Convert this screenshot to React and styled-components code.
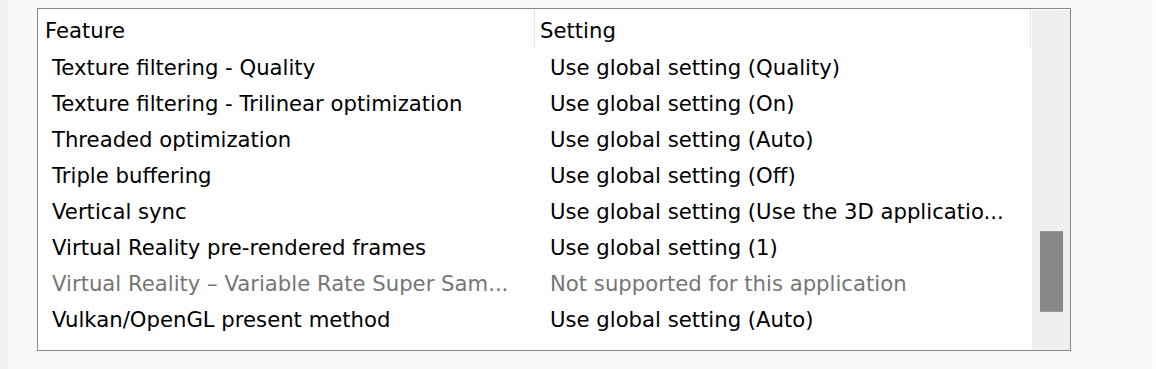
import React from "react";
import styled, { createGlobalStyle } from "styled-components";

const GlobalStyle = createGlobalStyle`
  html, body { margin: 0; padding: 0; background: #f9f9f9; }
  body { font-family: "DejaVu Sans", "Noto Sans", sans-serif; }
  * { box-sizing: border-box; }
`;

const Page = styled.div`
  width: 1156px;
  height: 369px;
  background: #f9f9f9;
  border-left: 8px solid #f0f0f0;
  border-right: 4px solid #fcfcfc;
  padding: 8px 0 0 29px;
`;

const ListBox = styled.div`
  width: 1034px;
  height: 343px;
  border: 1px solid #828790;
  background: #ffffff;
  padding-top: 1px;
  display: flex;
  overflow: hidden;
`;

const Content = styled.div`
  width: 994px;
  display: flex;
  flex-direction: column;
`;

const HeaderRow = styled.div`
  display: grid;
  grid-template-columns: 497px 496px;
  height: 40px;
`;

const HeaderCell = styled.div`
  height: 39px;
  border-right: 1px solid #e5e5e5;
  padding-left: ${(p) => p.$pad}px;
  padding-top: 1px;
  font-size: 21.2px;
  line-height: 39px;
  color: #000;
  white-space: nowrap;
`;

const Row = styled.div`
  display: grid;
  grid-template-columns: 497px 497px;
  height: 36px;
  font-size: 21.2px;
  line-height: 36px;
  color: ${(p) => (p.$disabled ? "#767676" : "#000000")};
`;

const Cell = styled.div`
  padding-left: ${(p) => p.$pad}px;
  white-space: nowrap;
  overflow: hidden;
`;

const ScrollTrack = styled.div`
  width: 38px;
  height: 340px;
  background: #efefef;
  display: flex;
  flex-direction: column;
  align-items: center;
`;

const Thumb = styled.div`
  width: 23px;
  height: 81px;
  margin-top: ${(p) => p.$offset}px;
  margin-left: 1px;
  background: #888888;
  border-top: 1px solid #999999;
  border-bottom: 1px solid #999999;
`;

const rows = [
  { feature: "Texture filtering - Quality", setting: "Use global setting (Quality)" },
  { feature: "Texture filtering - Trilinear optimization", setting: "Use global setting (On)" },
  { feature: "Threaded optimization", setting: "Use global setting (Auto)" },
  { feature: "Triple buffering", setting: "Use global setting (Off)" },
  { feature: "Vertical sync", setting: "Use global setting (Use the 3D applicatio..." },
  { feature: "Virtual Reality pre-rendered frames", setting: "Use global setting (1)" },
  {
    feature: "Virtual Reality – Variable Rate Super Sam...",
    setting: "Not supported for this application",
    disabled: true,
  },
  { feature: "Vulkan/OpenGL present method", setting: "Use global setting (Auto)" },
];

export default function App() {
  return (
    <>
      <GlobalStyle />
      <Page>
        <ListBox>
          <Content>
            <HeaderRow>
              <HeaderCell $pad={7}>Feature</HeaderCell>
              <HeaderCell $pad={5}>Setting</HeaderCell>
            </HeaderRow>
            {rows.map((r) => (
              <Row key={r.feature} $disabled={r.disabled}>
                <Cell $pad={14}>{r.feature}</Cell>
                <Cell $pad={15}>{r.setting}</Cell>
              </Row>
            ))}
          </Content>
          <ScrollTrack>
            <Thumb $offset={221} />
          </ScrollTrack>
        </ListBox>
      </Page>
    </>
  );
}
